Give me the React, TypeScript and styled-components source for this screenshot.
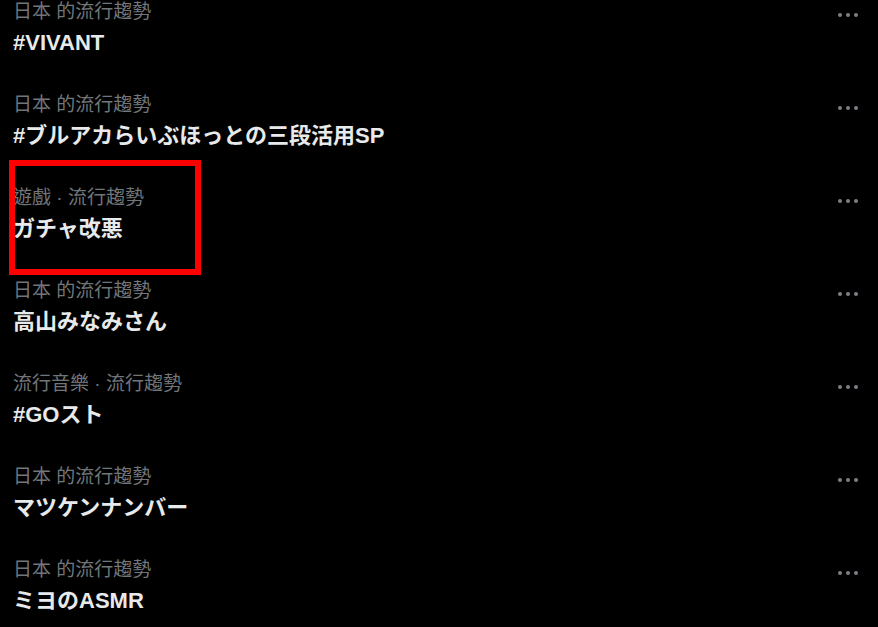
import React, {FunctionComponent} from 'react';
import styled, {createGlobalStyle} from 'styled-components';

const GlobalStl = createGlobalStyle`
    html, body {
        margin: 0;
        padding: 0;
        background: #000;
        overflow: hidden;
    }
`;

const PageStl = styled.div`
    width: 878px;
    height: 627px;
    overflow: hidden;
    background: #000;
`;

const ListStl = styled.div`
    display: flex;
    flex-direction: column;
    margin-top: -13px;
`;

const RowStl = styled.div`
    display: flex;
    justify-content: space-between;
    align-items: flex-start;
    height: 93px;
    box-sizing: border-box;
    padding: 12px 20px 0 13px;
    position: relative;
`;

const TextColStl = styled.div`
    display: flex;
    flex-direction: column;
`;

const LabelStl = styled.div`
    font-family: "Liberation Sans", "Noto Sans CJK TC", sans-serif;
    font-size: 19px;
    line-height: 26px;
    color: #71767b;
    white-space: nowrap;
`;

const TitleStl = styled.div`
    font-family: "Liberation Sans", "Noto Sans CJK JP", sans-serif;
    font-size: 22px;
    font-weight: 700;
    line-height: 35px;
    color: #e7e9ea;
    white-space: nowrap;
`;

const MoreBtn = styled.div`
    display: flex;
    gap: 4px;
    margin-top: 14px;
`;

const Dot = styled.span`
    width: 4px;
    height: 4px;
    border-radius: 50%;
    background: #7c8085;
`;

// red marker frame drawn over the selected trend
const Highlight = styled.div`
    position: absolute;
    left: 9px;
    top: -13px;
    width: 192px;
    height: 115px;
    box-sizing: border-box;
    border: 6px solid #f00;
    pointer-events: none;
`;

type Trend = {label: string; title: string; marked?: boolean};

const trends: Trend[] = [
    {label: '日本 的流行趨勢', title: '#VIVANT'},
    {label: '日本 的流行趨勢', title: '#ブルアカらいぶほっとの三段活用SP'},
    {label: '遊戲 · 流行趨勢', title: 'ガチャ改悪', marked: true},
    {label: '日本 的流行趨勢', title: '高山みなみさん'},
    {label: '流行音樂 · 流行趨勢', title: '#GOスト'},
    {label: '日本 的流行趨勢', title: 'マツケンナンバー'},
    {label: '日本 的流行趨勢', title: 'ミヨのASMR'},
];

const TrendRow: FunctionComponent<{trend: Trend}> = ({trend}) => (
    <RowStl>
        <TextColStl>
            <LabelStl>{trend.label}</LabelStl>
            <TitleStl>{trend.title}</TitleStl>
        </TextColStl>
        <MoreBtn>
            <Dot/><Dot/><Dot/>
        </MoreBtn>
        {trend.marked && <Highlight/>}
    </RowStl>
);

const App: FunctionComponent<{}> = () => (
    <PageStl>
        <GlobalStl/>
        <ListStl>
            {trends.map((t, i) => <TrendRow key={i} trend={t}/>)}
        </ListStl>
    </PageStl>
);

export default App;
